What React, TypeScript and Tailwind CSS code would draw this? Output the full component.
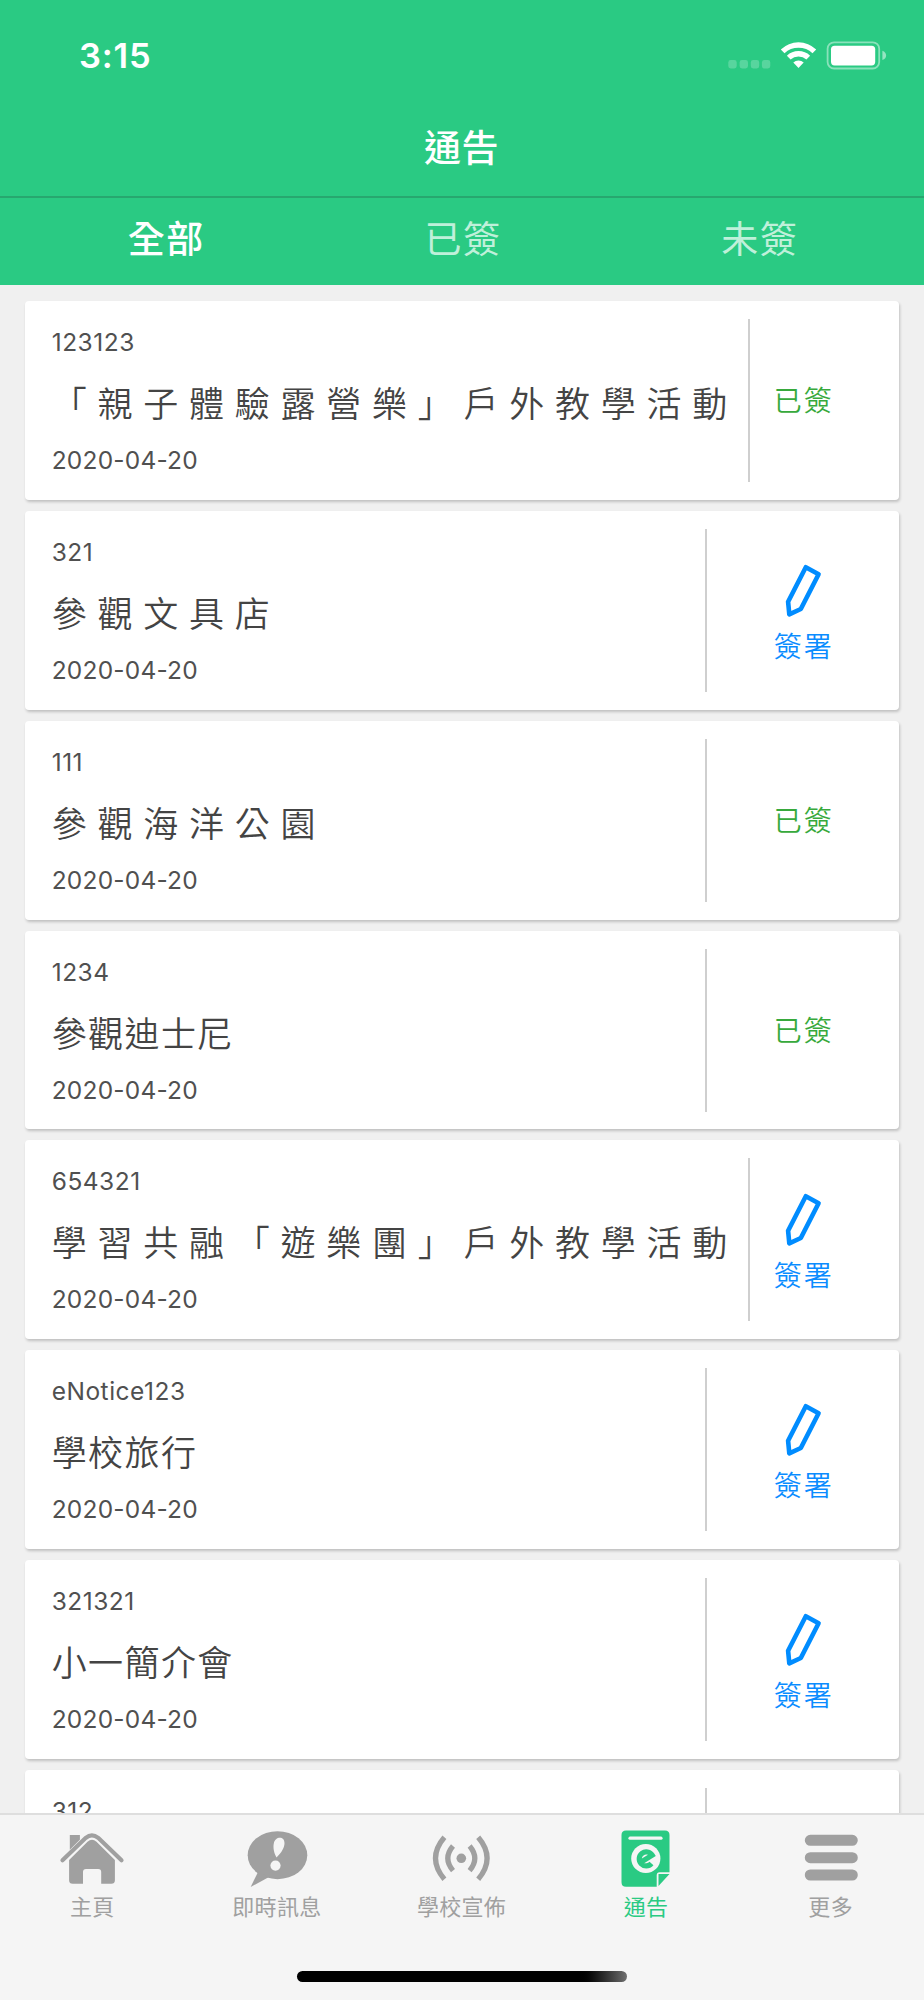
import type { ReactNode } from "react";

type Notice = {
  code: string;
  title?: string;
  date?: string;
  status?: "signed" | "pending";
  wide?: boolean;
};

const notices: Notice[] = [
  { code: "123123", title: "「 親 子 體 驗 露 營 樂 」 戶 外 教 學 活 動", date: "2020-04-20", status: "signed", wide: true },
  { code: "321", title: "參 觀 文 具 店", date: "2020-04-20", status: "pending" },
  { code: "111", title: "參 觀 海 洋 公 園", date: "2020-04-20", status: "signed" },
  { code: "1234", title: "參觀迪士尼", date: "2020-04-20", status: "signed" },
  { code: "654321", title: "學 習 共 融 「 遊 樂 團 」 戶 外 教 學 活 動", date: "2020-04-20", status: "pending", wide: true },
  { code: "eNotice123", title: "學校旅行", date: "2020-04-20", status: "pending" },
  { code: "321321", title: "小一簡介會", date: "2020-04-20", status: "pending" },
  { code: "312" },
];

function StatusBar() {
  return (
    <div className="flex h-[112px] items-center justify-between pr-[37px] pl-[79px]">
      <span className="font-['Inter',sans-serif] text-[34.5px] leading-[40px] font-semibold tracking-[0.8px]">3:15</span>
      <svg className="h-[30px] w-[159px]" viewBox="0 0 159 30" fill="none">
        <g fill="#fff" fillOpacity="0.22">
          <rect x="0.3" y="19" width="8.4" height="8.4" rx="2.4" />
          <rect x="11.6" y="19" width="8.4" height="8.4" rx="2.4" />
          <rect x="22.8" y="19" width="8.4" height="8.4" rx="2.4" />
          <rect x="33.9" y="19" width="8.4" height="8.4" rx="2.4" />
        </g>
        <g fill="#fff">
          <path d="M52.8 8.4a25.6 25.6 0 0 1 35.4 0l-3.7 3.9a20.2 20.2 0 0 0-28 0z" />
          <path d="M58.9 14.7a16.8 16.8 0 0 1 23.2 0l-3.7 3.8a11.6 11.6 0 0 0-15.8 0z" />
          <path d="M65.3 21.5a7.7 7.7 0 0 1 10.4 0l-5.2 5.6z" />
        </g>
        <rect x="99.6" y="1.3" width="51.6" height="26.2" rx="6.5" stroke="#fff" strokeOpacity="0.45" strokeWidth="1.8" />
        <rect x="103" y="4.7" width="44.2" height="19.7" rx="3.6" fill="#fff" />
        <path d="M154.4 9.7q3.7 1.5 3.7 4.7t-3.7 4.7z" fill="#fff" fillOpacity="0.5" />
      </svg>
    </div>
  );
}

function PencilIcon() {
  return (
    <svg className="h-[56px] w-[40px]" viewBox="0 0 40 56" fill="none" stroke="#008cff" strokeWidth="4.6" strokeLinejoin="round">
      <path d="M21.8 4.2 34.6 11.2 16.8 46 5.3 51.3 4.1 38.7z" />
    </svg>
  );
}

function NoticeCard({ notice }: { notice: Notice }) {
  return (
    <div className="flex h-[198.77px] shrink-0 rounded-[4px] bg-white shadow-[1px_2px_3px_rgba(0,0,0,0.2)]">
      <div className="flex min-w-0 flex-1 flex-col pt-[26px] pl-[27px] whitespace-nowrap">
        <div className="text-[24.5px] leading-[30px] tracking-[0.5px] text-[#505050]">{notice.code}</div>
        <div className="mt-[21px] h-[48px] font-['Noto_Sans_CJK_TC',sans-serif] text-[35px] leading-[48px] font-[350] tracking-[1.4px] [word-spacing:0.15px]">
          {notice.title}
        </div>
        <div className="mt-[19px] text-[24.5px] leading-[30px] tracking-[0.2px] text-[#505050]">{notice.date}</div>
      </div>
      <div className="mt-[18px] h-[163px] w-[2px] shrink-0 bg-[#cfcfcf]" />
      <div
        className={
          notice.wide
            ? "flex w-[149px] shrink-0 flex-col items-center pr-[42px]"
            : "flex w-[192px] shrink-0 flex-col items-center pl-px"
        }
      >
        {notice.status === "signed" && (
          <span className="mt-[80px] text-[28px] leading-[40px] font-[350] tracking-[2px] text-[#37a93c]">已簽</span>
        )}
        {notice.status === "pending" && (
          <>
            <div className="mt-[52px]">
              <PencilIcon />
            </div>
            <span className="mt-[8px] text-[28px] leading-[40px] font-[350] tracking-[2px] text-[#0a8cff]">簽署</span>
          </>
        )}
      </div>
    </div>
  );
}

function TabItem({ label, active, children }: { label: string; active?: boolean; children: ReactNode }) {
  return (
    <div className={active ? "flex flex-1 flex-col items-center text-[#2aca83]" : "flex flex-1 flex-col items-center text-[#a0a0a0]"}>
      <svg className="h-[60px] w-[66px]" viewBox="0 0 66 60" fill="none">
        {children}
      </svg>
      <span className="mt-[3px] text-[22px] leading-[30px] tracking-[0.3px]">{label}</span>
    </div>
  );
}

export default function App() {
  return (
    <div className="flex h-[2000px] w-[924px] flex-col overflow-hidden bg-[#f0f0f0] font-['Inter','Noto_Sans_CJK_TC',sans-serif] text-[#444]">
      <header className="h-[285.4px] shrink-0 bg-[#2aca83] text-white">
        <StatusBar />
        <h1 className="h-[84px] pt-[12px] pr-px text-center text-[37px] leading-[50px] font-medium tracking-[0.5px]">通告</h1>
        <div className="grid h-[89px] grid-cols-3 border-t-2 border-[#27a76f] pr-[16px] pl-[18px] pt-[17px] text-center text-[37px] leading-[50px] tracking-[1.5px]">
          <span className="font-medium">全部</span>
          <span className="text-[#bff0da]">已簽</span>
          <span className="text-[#bff0da]">未簽</span>
        </div>
      </header>

      <main className="flex min-h-0 flex-1 flex-col gap-[11px] overflow-hidden px-[24.7px] pt-[15.9px]">
        {notices.map((notice) => (
          <NoticeCard key={notice.code} notice={notice} />
        ))}
      </main>

      <nav className="flex h-[187px] shrink-0 flex-col border-t-2 border-[#dedede] bg-[#f5f5f5]">
        <div className="flex pt-[14px] pr-px">
          <TabItem label="主頁">
            <path d="M10.8 5.9h10.1v4.8L10.8 20.8z" fill="currentColor" />
            <path d="M3.5 31.3 26.8 8.8q6-5 12.4 0l23.3 22.5" stroke="currentColor" strokeWidth="4.2" strokeLinecap="round" />
            <path d="M10.1 31 28.5 12.8q4.5-4 9 0L55.9 31v20.2q0 3.6-3.6 3.6H42.2V43q0-3-3-3H27q-3 0-3 3v11.8H13.7q-3.6 0-3.6-3.6z" fill="currentColor" />
          </TabItem>
          <TabItem label="即時訊息">
            <ellipse cx="33.5" cy="26.2" rx="29.8" ry="24" fill="currentColor" />
            <path d="m14 43-7.3 15L25 48z" fill="currentColor" />
            <path d="M32.5 28.4C29 22 29.3 17 29.8 14.5c1.2-7 10.7-8 10.7-.2 0 4-2.8 9.5-8 14.1z" fill="#f5f5f5" />
            <circle cx="31.5" cy="36.6" r="5.1" fill="#f5f5f5" />
          </TabItem>
          <TabItem label="學校宣佈">
            <circle cx="33.3" cy="29.3" r="4.8" fill="currentColor" />
            <g stroke="currentColor" strokeWidth="5.2">
              <path d="M16.4 8.3q-17.8 21 0 42M25 17q-10.4 12.3 0 24.6" />
              <path d="M50.2 8.3q17.8 21 0 42M41.6 17q10.4 12.3 0 24.6" />
            </g>
          </TabItem>
          <TabItem label="通告" active>
            <path d="M13 1.5h39q4.5 0 4.5 4.5v37.2H46.7q-3 0-3 3v11.5H13q-4.5 0-4.5-4.5V6q0-4.5 4.5-4.5z" fill="currentColor" />
            <path d="M45.5 57V45.1h11z" fill="currentColor" />
            <path d="M17 9.2h31" stroke="#f5f5f5" strokeWidth="3.2" strokeLinecap="round" />
            <circle cx="32.8" cy="29.5" r="14.6" fill="#f5f5f5" />
            <path d="M29 32.5 39.2 26.2A7 7 0 1 0 38.5 34.5" stroke="currentColor" strokeWidth="5.2" />
          </TabItem>
          <TabItem label="更多">
            <g stroke="currentColor" strokeWidth="11" strokeLinecap="round">
              <path d="M12.3 11.3h42M12.3 28.7h42M12.3 46h42" />
            </g>
          </TabItem>
        </div>
        <div className="mx-auto mt-[49px] h-[11px] w-[330px] rounded-full bg-linear-to-r from-black from-85% to-[#707070]" />
      </nav>
    </div>
  );
}
